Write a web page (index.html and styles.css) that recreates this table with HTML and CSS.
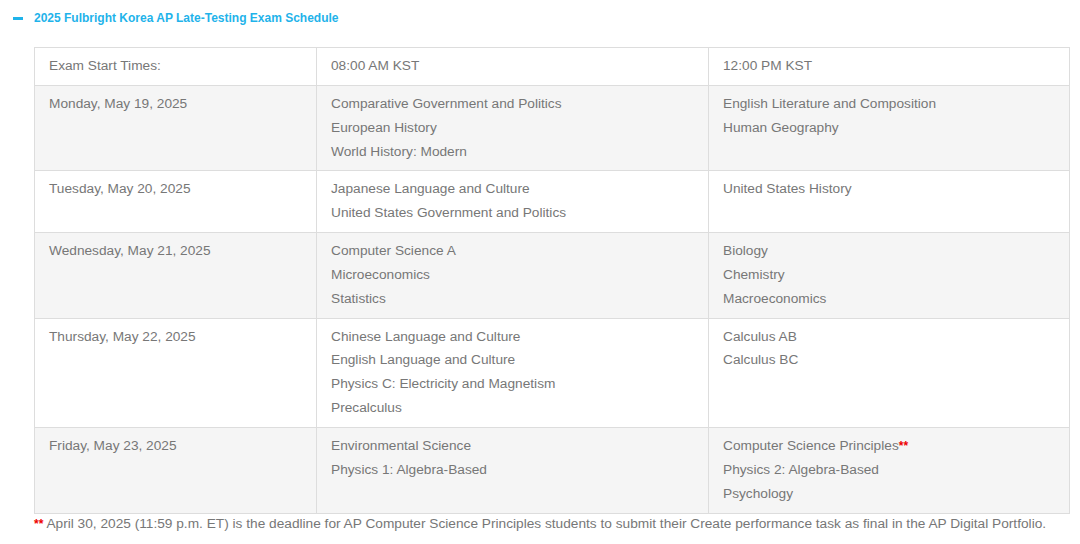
FILE: index.html
```html
<!DOCTYPE html>
<html>
<head>
<meta charset="utf-8">
<link rel="stylesheet" href="styles.css">
</head>
<body>
<div class="section">
  <div class="toggle">
    <span class="minus"></span>
    <span class="title">2025 Fulbright Korea AP Late-Testing Exam Schedule</span>
  </div>
  <div class="content">
    <table class="sched">
      <colgroup><col class="c1"><col class="c2"><col class="c3"></colgroup>
      <tr class="w"><td>Exam Start Times:</td><td>08:00 AM KST</td><td>12:00 PM KST</td></tr>
      <tr class="g"><td>Monday, May 19, 2025</td><td>Comparative Government and Politics<br>European History<br>World History: Modern</td><td>English Literature and Composition<br>Human Geography</td></tr>
      <tr class="w"><td>Tuesday, May 20, 2025</td><td>Japanese Language and Culture<br>United States Government and Politics</td><td>United States History</td></tr>
      <tr class="g"><td>Wednesday, May 21, 2025</td><td>Computer Science A<br>Microeconomics<br>Statistics</td><td>Biology<br>Chemistry<br>Macroeconomics</td></tr>
      <tr class="w"><td>Thursday, May 22, 2025</td><td>Chinese Language and Culture<br>English Language and Culture<br>Physics C: Electricity and Magnetism<br>Precalculus</td><td>Calculus AB<br>Calculus BC</td></tr>
      <tr class="g"><td>Friday, May 23, 2025</td><td>Environmental Science<br>Physics 1: Algebra-Based</td><td>Computer Science Principles<span class="star">**</span><br>Physics 2: Algebra-Based<br>Psychology</td></tr>
    </table>
    <p class="note"><span class="star">**</span> April 30, 2025 (11:59 p.m. ET) is the deadline for AP Computer Science Principles students to submit their Create performance task as final in the AP Digital Portfolio.</p>
  </div>
</div>
</body>
</html>
```
FILE: styles.css
```css
html, body {
  margin: 0;
  padding: 0;
  background: #fff;
  font-family: "Liberation Sans", Arial, sans-serif;
}
.section {
  padding: 10px 0 0 0;
}
.toggle {
  display: flex;
  align-items: center;
  height: 16px;
  padding-left: 13px;
}
.minus {
  display: block;
  width: 10px;
  height: 3px;
  background: #1fb3ea;
  margin-right: 11px;
}
.title {
  font-size: 12px;
  font-weight: bold;
  color: #1fb3ea;
}
.content {
  padding: 21px 0 0 34px;
}
.sched {
  border-collapse: collapse;
  width: 1035px;
  table-layout: fixed;
  font-size: 13.7px;
  color: #777;
}
.c1 { width: 282px; }
.c2 { width: 392px; }
.c3 { width: 361px; }
.sched td {
  border: 1px solid #ddd;
  padding: 6px 14px 7px 14px;
  line-height: 23.85px;
  vertical-align: top;
}
.sched tr.g td { background: #f5f5f5; }
.sched tr.w td { background: #fff; }
.star {
  color: #e00;
  font-weight: bold;
  font-size: 12px;
  line-height: 0;
}
.note {
  margin: 0;
  font-size: 13.7px;
  line-height: 20px;
  color: #777;
}
```
